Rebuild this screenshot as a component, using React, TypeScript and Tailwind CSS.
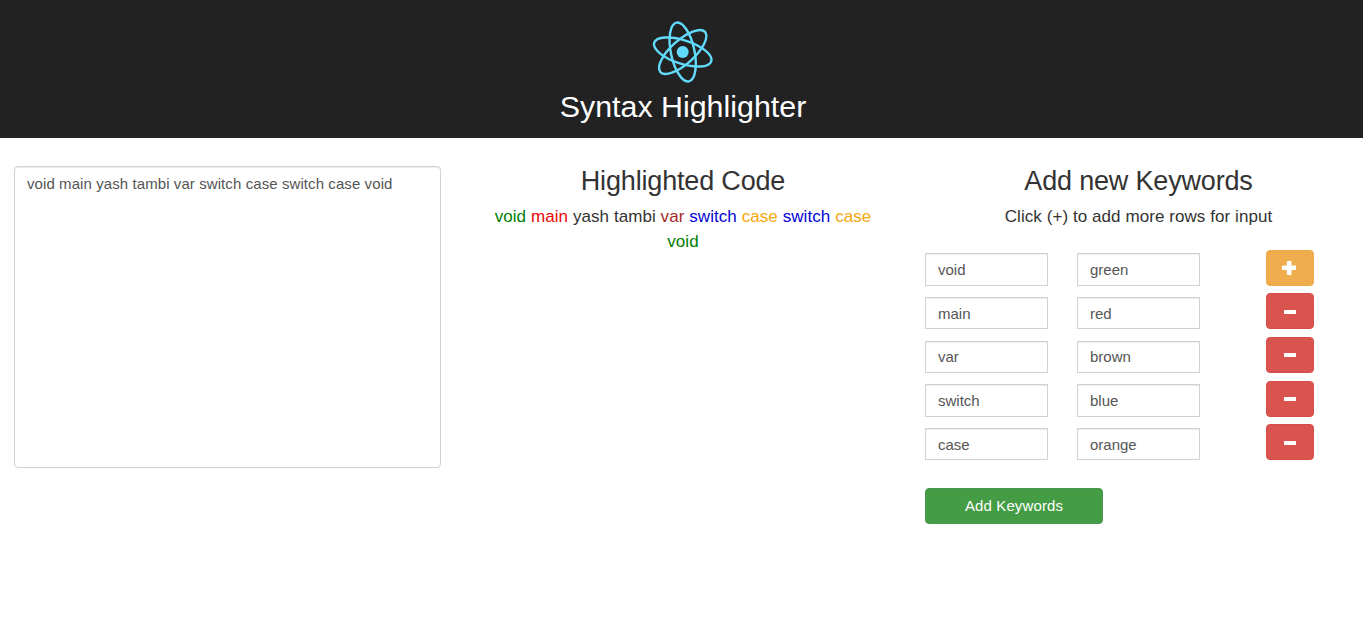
import React, { useState } from "react";

type Row = { id: number; word: string; color: string };

const initialRows: Row[] = [
  { id: 1, word: "void", color: "green" },
  { id: 2, word: "main", color: "red" },
  { id: 3, word: "var", color: "brown" },
  { id: 4, word: "switch", color: "blue" },
  { id: 5, word: "case", color: "orange" },
];

const shades: Record<string, string> = {
  green: "#008000",
  red: "#ea0606",
  brown: "#a52a2a",
  blue: "#0404d6",
  orange: "#f5a80c",
};

function Logo() {
  return (
    <svg className="h-[66px] w-[66px]" viewBox="-32.7 -33 66 66" fill="none" stroke="#61dafb" strokeWidth="2.4">
      <circle r="6" fill="#61dafb" stroke="none" />
      <ellipse rx="30" ry="11.8" transform="rotate(18)" />
      <ellipse rx="30" ry="11.8" transform="rotate(78)" />
      <ellipse rx="30" ry="11.8" transform="rotate(138)" />
    </svg>
  );
}

function Field({ value, onChange }: { value: string; onChange: (v: string) => void }) {
  return (
    <input
      className="block h-[32.4px] w-[123px] border border-[#d2d2d2] bg-white px-3 text-[15px] text-[#555] shadow-[inset_0_1px_1px_rgba(0,0,0,0.075)] outline-none"
      value={value}
      onChange={(e) => onChange(e.target.value)}
    />
  );
}

export default function App() {
  const [code, setCode] = useState("void main yash tambi var switch case switch case void");
  const [rows, setRows] = useState<Row[]>(initialRows);
  const [active, setActive] = useState<Row[]>(initialRows);

  const update = (id: number, patch: Partial<Row>) =>
    setRows(rows.map((r) => (r.id === id ? { ...r, ...patch } : r)));

  const colorOf = (word: string) => {
    const color = active.find((r) => r.word === word)?.color;
    return color && (shades[color] ?? color);
  };

  return (
    <div className="min-h-[643px] bg-white font-['Liberation_Sans',Arial,sans-serif] text-[#333]">
      <header className="flex h-[138px] flex-col items-center bg-[#222] pt-[19px] pl-[3px] text-white">
        <Logo />
        <h1 className="mt-1 text-[30.4px] leading-[34px]">Syntax Highlighter</h1>
      </header>

      <main className="flex items-start pt-7 pl-3.5">
        <textarea
          className="block h-[302px] w-[427px] resize-none rounded-[4px] border border-[#d2d2d2] px-3 py-1.5 text-[15px] leading-[21px] tracking-[0.085px] text-[#555] shadow-[inset_0_1px_1px_rgba(0,0,0,0.075)] outline-none"
          value={code}
          spellCheck={false}
          onChange={(e) => setCode(e.target.value)}
        />

        <section className="ml-7 w-[428px] px-[14px] text-center">
          <h2 className="text-[27px] leading-[30px] tracking-[-0.17px]">Highlighted Code</h2>
          <p className="mt-2 text-[17px] leading-[25px] tracking-[0.07px]">
            {code.split(" ").map((word, i) => (
              <React.Fragment key={i}>
                <span style={{ color: colorOf(word) }}>{word}</span>{" "}
              </React.Fragment>
            ))}
          </p>
        </section>

        <section className="ml-7 w-[427px]">
          <h2 className="text-center text-[27px] leading-[30px] tracking-[-0.17px]">Add new Keywords</h2>
          <p className="mt-2 text-center text-[17px] leading-[25px] tracking-[0.07px]">
            Click (+) to add more rows for input
          </p>
          <div className="mt-[20.82px] flex flex-col gap-[7.61px]">
            {rows.map((row, i) => (
              <div key={row.id} className="flex h-9 items-end">
                <Field value={row.word} onChange={(word) => update(row.id, { word })} />
                <div className="ml-[29px] flex">
                  <Field value={row.color} onChange={(color) => update(row.id, { color })} />
                </div>
                {i === 0 ? (
                  <button
                    aria-label="Add row"
                    className="ml-[66px] flex h-9 w-12 items-center justify-center rounded-[4px] border border-[#efa945] bg-[#f0ad4e]"
                    onClick={() => setRows([...rows, { id: Date.now(), word: "", color: "" }])}
                  >
                    <svg className="h-[14px] w-[14px] -translate-x-px" viewBox="0 0 14 14" fill="white">
                      <path d="M5.2 0h3.9q.4 0 .4.4v4.2h4.1q.4 0 .4.4v3.5q0 .4-.4.4H9.5v4.7q0 .4-.4.4H5.2q-.4 0-.4-.4V8.9H.4Q0 8.9 0 8.5V5q0-.4.4-.4h4.4V.4q0-.4.4-.4z" />
                    </svg>
                  </button>
                ) : (
                  <button
                    aria-label="Remove row"
                    className="ml-[66px] flex h-9 w-12 items-center justify-center rounded-[4px] border border-[#d74d49] bg-[#d9534f]"
                    onClick={() => setRows(rows.filter((r) => r.id !== row.id))}
                  >
                    <svg className="mt-[0.8px] h-1 w-3" viewBox="0 0 12 4" fill="white">
                      <rect width="12" height="4" rx="0.5" />
                    </svg>
                  </button>
                )}
              </div>
            ))}
          </div>
          <button
            className="mt-[27.6px] h-9 w-[178px] rounded-[4px] border border-[#4b964e] bg-[#449d44] text-[15px] tracking-[0.12px] text-white"
            onClick={() => setActive(rows)}
          >
            Add Keywords
          </button>
        </section>
      </main>
    </div>
  );
}
